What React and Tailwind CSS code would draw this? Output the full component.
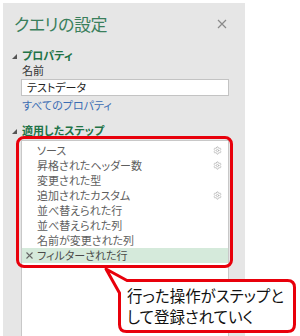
import { Settings } from "lucide-react";

const steps = [
  { name: "ソース", gear: true },
  { name: "昇格されたヘッダー数", gear: true },
  { name: "変更された型" },
  { name: "追加されたカスタム", gear: true },
  { name: "並べ替えられた行" },
  { name: "並べ替えられた列" },
  { name: "名前が変更された列" },
  { name: "フィルターされた行", active: true },
];

const SectionHeader = ({ label, className }) => (
  <div className={`flex h-[16px] items-center ${className}`}>
    <svg width="5" height="5" viewBox="0 0 5 5" className="ml-[9px] mr-[5px] mt-[2px]">
      <polygon points="5,0 5,5 0,5" fill="#555" />
    </svg>
    <span className="text-[11px] font-bold text-[#217346]">{label}</span>
  </div>
);

const App = () => {
  return (
    <div className="relative h-[336px] w-[300px] overflow-hidden bg-white font-['Noto_Sans_CJK_JP',sans-serif] [font-feature-settings:'palt']">
      <div className="ml-[3px] mt-[3px] flex h-[333px] w-[242px] flex-col bg-[#e6e6e6]">
        <div className="mt-[9px] flex h-[24px] items-center justify-between pl-[11px] pr-[18px]">
          <span className="text-[17px] tracking-[-0.5px] text-[#3a7f5c]">クエリの設定</span>
          <svg width="10" height="10" viewBox="0 0 10 10">
            <path d="M1 1L9 9M9 1L1 9" stroke="#8a8a8a" strokeWidth="1.2" />
          </svg>
        </div>

        <SectionHeader label="プロパティ" className="mt-[11px]" />
        <div className="flex h-[14px] items-center pl-[19px] text-[11px] text-[#333]">名前</div>
        <div className="ml-[18px] mt-[2px] flex h-[17px] w-[208px] items-center border border-[#c3c3c3] bg-white pl-[5px] text-[11px] text-[#222]">
          テストデータ
        </div>
        <div className="mt-[1px] flex h-[16px] items-center pl-[19px] text-[11px] text-[#3b6db3]">
          すべてのプロパティ
        </div>

        <SectionHeader label="適用したステップ" className="mt-[9px]" />
        <div className="ml-[18px] mt-[2px] flex w-[208px] flex-1 flex-col border border-b-0 border-[#c8c8c8] bg-white pt-[2px]">
          {steps.map((s) => (
            <div
              key={s.name}
              className={`flex h-[15px] items-center pl-[4px] pr-[6px] text-[11px] ${
                s.active ? "bg-[#d5eadb] text-[#4a4a4a]" : "text-[#5e5e5e]"
              }`}
            >
              <span className="flex w-[11px] items-center">
                {s.active && (
                  <svg width="7" height="7" viewBox="0 0 7 7">
                    <path d="M0.5 0.5L6.5 6.5M6.5 0.5L0.5 6.5" stroke="#666" strokeWidth="1.1" />
                  </svg>
                )}
              </span>
              <span className="flex-1">{s.name}</span>
              {s.gear && <Settings size={9} color="#b0b0b0" strokeWidth={2} />}
            </div>
          ))}
        </div>
      </div>

      {/* steps highlight */}
      <div className="absolute left-[16px] top-[136px] h-[132px] w-[217px] rounded-[8px] border-[3px] border-[#e8000b]" />

      {/* callout */}
      <svg className="absolute left-0 top-0" width="300" height="336" viewBox="0 0 300 336">
        <path
          d="M127 280.5H287.5Q294.5 280.5 294.5 287.5V324.5Q294.5 331.5 287.5 331.5H126.5Q119.5 331.5 119.5 324.5V293L106 269Z"
          fill="white"
          stroke="#e8000b"
          strokeWidth="3"
          strokeLinejoin="round"
        />
      </svg>
      <div className="absolute left-[127px] top-[285px] flex flex-col text-[15.5px] text-[#111]">
        <span className="leading-[20px]">行った操作がステップと</span>
        <span className="mt-[1px] leading-[20px]">して登録されていく</span>
      </div>
    </div>
  );
};

export default App;
